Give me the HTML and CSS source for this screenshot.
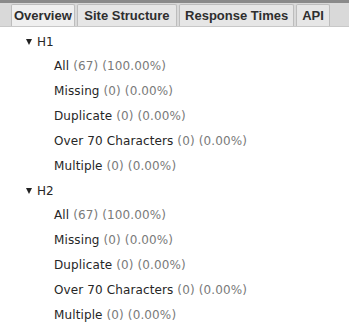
FILE: index.html
```html
<!DOCTYPE html>
<html>
<head>
<meta charset="utf-8">
<link rel="stylesheet" href="styles.css">
</head>
<body>
<div class="tabbar">
  <div class="tab active">Overview</div>
  <div class="tab wide">Site Structure</div>
  <div class="tab">Response Times</div>
  <div class="tab">API</div>
</div>
<div class="tree">
  <div class="group">
    <div class="head"><span class="tri"></span>H1</div>
    <div class="row">All <span class="n">(67) (100.00%)</span></div>
    <div class="row">Missing <span class="n">(0) (0.00%)</span></div>
    <div class="row">Duplicate <span class="n">(0) (0.00%)</span></div>
    <div class="row">Over 70 Characters <span class="n">(0) (0.00%)</span></div>
    <div class="row">Multiple <span class="n">(0) (0.00%)</span></div>
  </div>
  <div class="group">
    <div class="head"><span class="tri"></span>H2</div>
    <div class="row">All <span class="n">(67) (100.00%)</span></div>
    <div class="row">Missing <span class="n">(0) (0.00%)</span></div>
    <div class="row">Duplicate <span class="n">(0) (0.00%)</span></div>
    <div class="row">Over 70 Characters <span class="n">(0) (0.00%)</span></div>
    <div class="row">Multiple <span class="n">(0) (0.00%)</span></div>
  </div>
</div>
</body>
</html>
```

FILE: styles.css
```css
html, body {
  margin: 0;
  padding: 0;
  background: #ffffff;
}
body {
  width: 349px;
  height: 332px;
  overflow: hidden;
}
.tabbar {
  display: flex;
  align-items: flex-end;
  gap: 2px;
  height: 27px;
  box-sizing: border-box;
  border-top: 3px solid #8a8a8a;
  background: #d9d9d9;
  padding-left: 11px;
  border-bottom: 1px solid #c8c8c8;
}
.tab {
  height: 22px;
  box-sizing: border-box;
  padding: 0 5px;
  border: 1px solid #bdbdbd;
  border-bottom: none;
  background: #e6e6e6;
  font-family: "Liberation Sans", Arial, sans-serif;
  font-weight: bold;
  font-size: 13px;
  color: #2e2e2e;
  line-height: 21px;
  border-radius: 2px 2px 0 0;
  white-space: nowrap;
}
.tab.active {
  padding: 0 2px;
  background: #efefef;
}
.tab.wide {
  padding: 0 6.5px;
}
.tree {
  font-family: "DejaVu Sans", sans-serif;
  font-size: 12px;
  color: #262626;
  padding-top: 3px;
}
.head {
  display: flex;
  align-items: center;
  height: 24px;
  padding-left: 26px;
}
.tri {
  width: 0;
  height: 0;
  border-left: 3.5px solid transparent;
  border-right: 3.5px solid transparent;
  border-top: 6px solid #222;
  margin-right: 5px;
}
.row {
  height: 25px;
  line-height: 25px;
  padding-left: 54px;
  white-space: nowrap;
  letter-spacing: 0.12px;
}
.n {
  color: #7a7a7a;
}
```
